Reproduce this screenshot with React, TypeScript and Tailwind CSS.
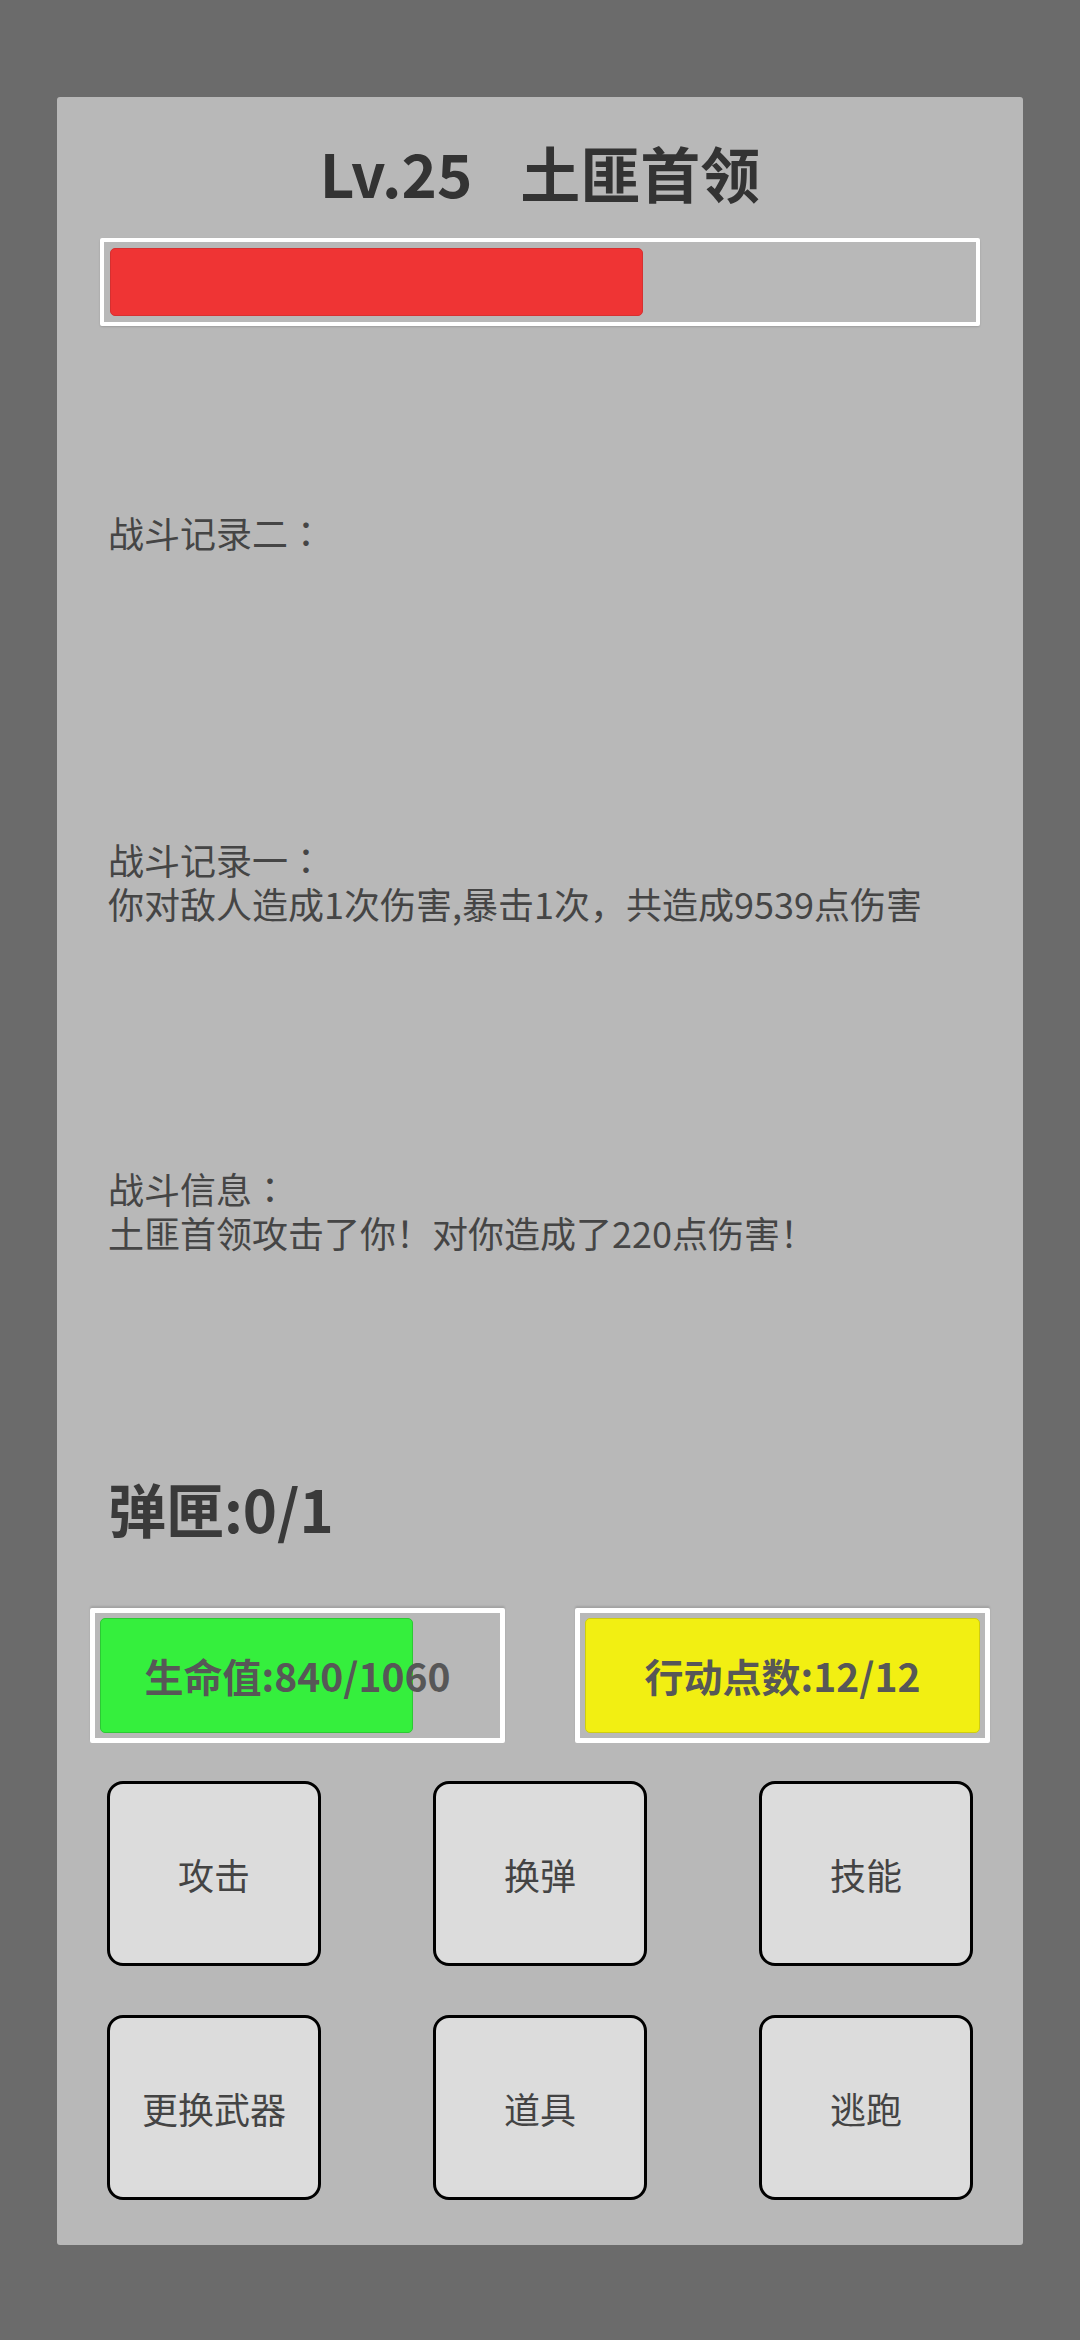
// 战斗界面 - 敌人信息、战斗记录、状态条与操作按钮

const font = 'font-["Noto_Sans_CJK_SC","Noto_Sans",sans-serif]';

interface StatBarProps {
    label: string;
    value: number;
    max: number;
    fill: string;
}

const StatBar = ({ label, value, max, fill }: StatBarProps) => {
    const pct = (value / max) * 100;
    return (
        <div className="relative w-[415px] h-[135px] border-[5px] border-white p-[5px] rounded-[2px] shadow-[0_-2px_2px_rgba(0,0,0,0.12)]">
            <div className="w-full h-full">
                <div
                    className={`h-full rounded-[5px] ${fill}`}
                    style={{ width: `${pct}%` }}
                />
            </div>
            <div className="absolute inset-0 flex items-center justify-center text-[39px] font-bold text-[#575757] leading-none">
                {label}:{value}/{max}
            </div>
        </div>
    );
};

// 冒号居中显示
const Colon = () => <span className='font-["Noto_Sans_CJK_TC",sans-serif]'>：</span>;

const actions = ['攻击', '换弹', '技能', '更换武器', '道具', '逃跑'];

export default function App() {
    const bossHp = 0.62;

    return (
        <div className={`w-[1080px] min-h-[2340px] bg-[#6b6b6b] pt-[97px] px-[57px] ${font}`}>
            <div className="bg-[#b8b8b8] rounded-[3px] px-[43px] pb-[45px] flex flex-col">
                {/* 敌人名称 */}
                <div className="mt-[45px] flex justify-center items-center gap-[48px] text-[60px] font-bold leading-none text-[#333333]">
                    <span>Lv.25</span>
                    <span>土匪首领</span>
                </div>

                {/* 敌人血条 */}
                <div className="mt-[36px] h-[88px] border-[4px] border-white p-[6px] rounded-[2px] shadow-[0_1px_2px_rgba(0,0,0,0.15)]">
                    <div
                        className="h-full bg-[#ef3434] rounded-[5px] border border-[#d63030]"
                        style={{ width: `${bossHp * 100}%` }}
                    />
                </div>

                {/* 战斗记录 */}
                <div className="pl-[8px] text-[36px] leading-[44px] text-[#454545]">
                    <div className="mt-[184px]">战斗记录二<Colon /></div>
                    <div className="mt-[283px]">
                        <div>战斗记录一<Colon /></div>
                        <div>你对敌人造成1次伤害,暴击1次，共造成9539点伤害</div>
                    </div>
                    <div className="mt-[241px]">
                        <div>战斗信息<Colon /></div>
                        <div>土匪首领攻击了你！对你造成了220点伤害！</div>
                    </div>
                </div>

                {/* 弹匣 */}
                <div className="mt-[225px] pl-[8px] text-[58px] font-bold leading-none text-[#3a3a3a]">
                    弹匣:0/1
                </div>

                {/* 状态条 */}
                <div className="mt-[71px] -mx-[10px] flex justify-between">
                    <StatBar label="生命值" value={840} max={1060} fill="bg-[#35ef3d] border border-[#2cc934]" />
                    <StatBar label="行动点数" value={12} max={12} fill="bg-[#f2ef12] border border-[#cfcc10]" />
                </div>

                {/* 操作按钮 */}
                <div className="mt-[38px] px-[7px] grid grid-cols-[214px_214px_214px] justify-between gap-y-[49px]">
                    {actions.map((a) => (
                        <button
                            key={a}
                            className="h-[185px] bg-[#dcdcdc] border-[3px] border-black rounded-[16px] text-[36px] text-[#444444] flex items-center justify-center"
                        >
                            {a}
                        </button>
                    ))}
                </div>
            </div>
        </div>
    );
}
